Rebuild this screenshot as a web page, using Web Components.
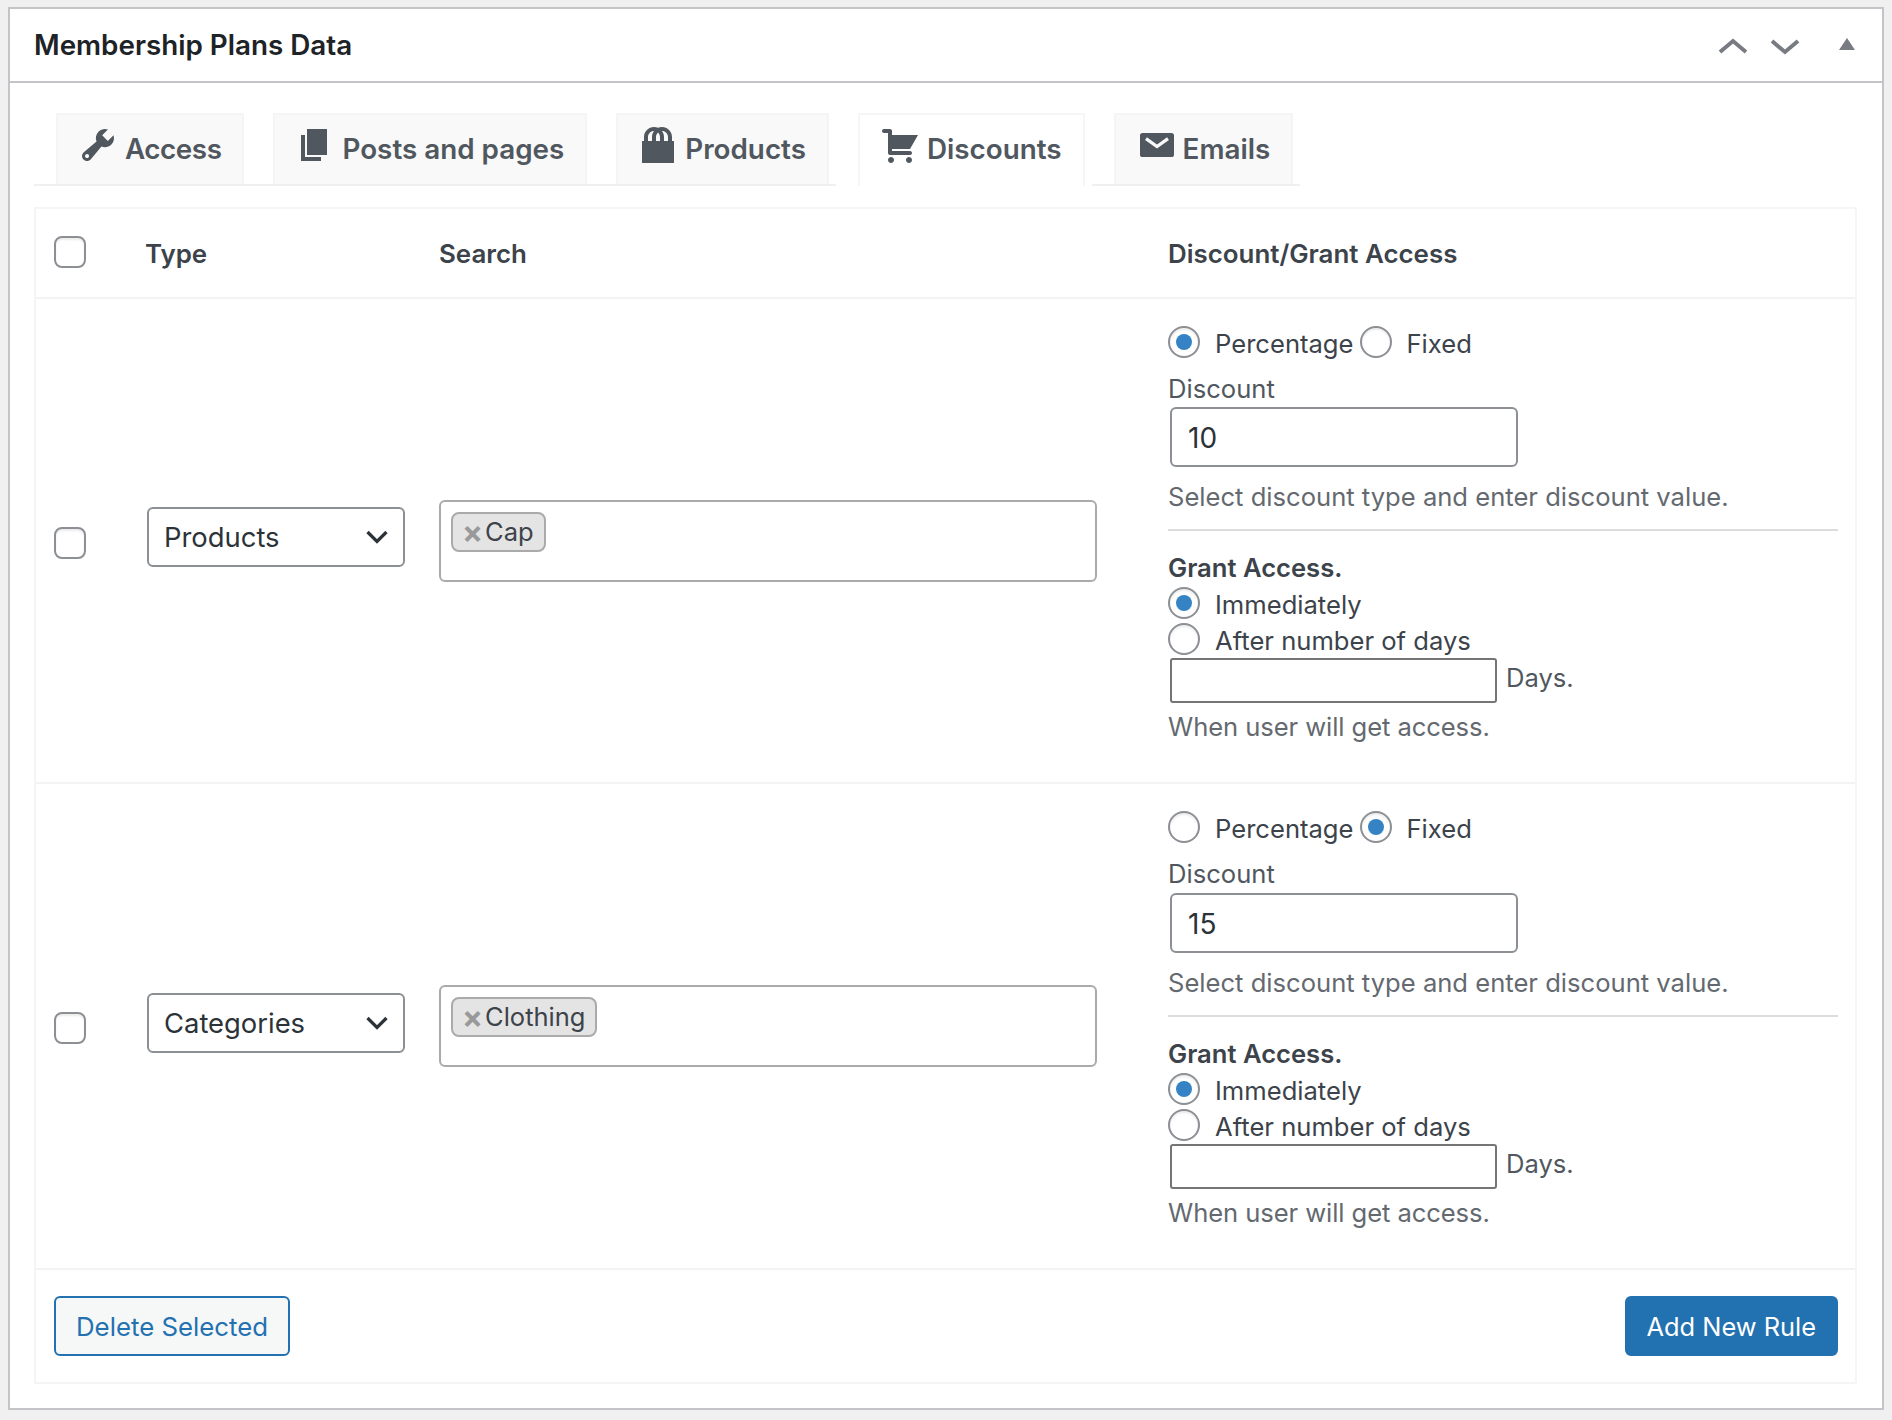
<!DOCTYPE html>
<html lang="en"><head><meta charset="utf-8"><title>Membership Plans Data</title>
<style>
html,body{margin:0;padding:0;background:#f0f0f1}
body{padding:7px 8px 10px;font-family:Inter,"Liberation Sans",sans-serif;font-size:27px;color:#3c434a}
</style></head><body>
<x-metabox heading="Membership Plans Data">
  <x-tabs>
    <x-tab icon="tools" style="letter-spacing:-.45px">Access</x-tab>
    <x-tab icon="page">Posts and pages</x-tab>
    <x-tab icon="bag">Products</x-tab>
    <x-tab icon="cart" active>Discounts</x-tab>
    <x-tab icon="mail">Emails</x-tab>
  </x-tabs>
  <x-rules>
    <x-rule type="Products" tag="Cap" mode="percentage" value="10"></x-rule>
    <x-rule type="Categories" tag="Clothing" mode="fixed" value="15" style="height:486px;--gap:3px"></x-rule>
  </x-rules>
</x-metabox>
<script>
const p=d=>`<path fill="#50575e" d="${d}"/>`;
const ICONS={
tools:p('M16.68 9.77c-1.34 1.34-3.3 1.67-4.95.99l-5.41 6.52c-.99.99-2.59.99-3.58 0s-.99-2.59 0-3.57l6.52-5.42c-.68-1.65-.35-3.61.99-4.95 1.28-1.28 3.12-1.62 4.72-1.06l-2.89 2.89 2.82 2.82 2.86-2.87c.53 1.58.18 3.39-1.08 4.65zM3.81 16.21c.4.39 1.04.39 1.43 0 .4-.4.4-1.04 0-1.43-.39-.4-1.03-.4-1.43 0-.39.39-.39 1.03 0 1.43z'),
page:p('M6 15V2h10v13H6zm-1 1h8v2H3V5h2v11z'),
bag:p('M17 8h1v11H2V8h1V6c0-2.76 2.24-5 5-5 .71 0 1.39.15 2 .42.61-.27 1.29-.42 2-.42 2.76 0 5 2.24 5 5v2zM5 6v2h2V6c0-1.13.39-2.16 1.02-3H8C6.35 3 5 4.35 5 6zm10 2V6c0-1.65-1.35-3-3-3h-.02c.63.84 1.02 1.87 1.02 3v2h2zm-5-4.22C9.39 4.33 9 5.12 9 6v2h2V6c0-.88-.39-1.67-1-2.22z'),
cart:p('M6 13h9c.55 0 1 .45 1 1s-.45 1-1 1H5c-.55 0-1-.45-1-1V4H2c-.55 0-1-.45-1-1s.45-1 1-1h3c.55 0 1 .45 1 1v2h13l-4 7H6v1zm-.5 3c.83 0 1.5.67 1.5 1.5S6.33 19 5.5 19 4 18.33 4 17.5 4.67 16 5.5 16zm9 0c.83 0 1.5.67 1.5 1.5s-.67 1.5-1.5 1.5-1.5-.67-1.5-1.5.67-1.5 1.5-1.5z'),
mail:'<rect x="2" y="4" width="17" height="12" rx="1.3" fill="#50575e"/><path d="M5 6.800 10.500 10.800 16 6.800" fill="none" stroke="#f9f9f9" stroke-width="1.600"/>'};
class Base extends HTMLElement{
  constructor(){super();this.attachShadow({mode:'open'})}
  connectedCallback(){this.shadowRoot.innerHTML=this.render()}
}
const a=(el,n,d='')=>el.getAttribute(n)??d;
customElements.define('x-metabox',class extends Base{render(){return `<style>
:host{display:block;background:#fff;border:2px solid #c3c4c7}
header{display:flex;align-items:center;height:72px;padding:0 0 0 24px;border-bottom:2px solid #c3c4c7;box-sizing:content-box}
h2{flex:1;margin:0;font:600 27.8px/32px Inter,sans-serif;color:#1d2327}
.ctl{display:flex;align-items:flex-start;height:72px;padding-right:26px}
svg{display:block}
main{display:block;padding:30px 25px 24px 24px}
</style><header><h2>${a(this,'heading')}</h2><div class="ctl">
<svg width="34" height="72" viewBox="0 0 34 72" style="margin-right:18px"><path d="M4 43 17 32 30 43" fill="none" stroke="#787c82" stroke-width="4"/></svg>
<svg width="34" height="72" viewBox="0 0 34 72" style="margin-right:36px"><path d="M4 32 17 43 30 32" fill="none" stroke="#787c82" stroke-width="4"/></svg>
<svg width="18" height="72" viewBox="0 0 18 72"><path d="M9 29 17 41H1z" fill="#787c82"/></svg>
</div></header><main><slot></slot></main>`}});
customElements.define('x-tabs',class extends Base{render(){return `<style>
:host{display:flex;margin-bottom:21px}
</style><slot></slot>`}});
customElements.define('x-tab',class extends Base{render(){const on=this.hasAttribute('active');return `<style>
:host{display:block;padding:0 7px 0 22px;${on?'':'border-bottom:2px solid #f0f0f1;'}}
.t{display:flex;align-items:flex-start;gap:7px;box-sizing:border-box;height:${on?73:71}px;padding:10px 21px 0 20px;border:2px solid ${on?'#f6f6f6':'#f5f5f5'};border-bottom:0;background:${on?'#fff':'#f9f9f9'};
font:600 27.8px/48px Inter,sans-serif;color:#50575e}
svg{display:block;flex:none}
</style><div class="t"><svg width="40" height="40" viewBox="0 0 20 20">${ICONS[a(this,'icon')]}</svg><span><slot></slot></span></div>`}});
customElements.define('x-rules',class extends Base{render(){return `<style>
:host{display:block;border:2px solid #f5f5f5}
.h{display:grid;grid-template-columns:91px 294px 729px 1fr;height:86px;padding:2px 0 0 18px;align-items:center;border-bottom:2px solid #f3f3f3;font:600 25.9px/34px Inter,sans-serif;color:#3c434a}
.h x-check{margin-top:-4px}
.f{display:flex;justify-content:space-between;padding:26px 17px 26px 18px}
</style><div class="h"><x-check></x-check><span>Type</span><span>Search</span><span>Discount/Grant Access</span></div>
<slot></slot>
<div class="f"><x-btn>Delete Selected</x-btn><x-btn primary>Add New Rule</x-btn></div>`}});
customElements.define('x-check',class extends Base{render(){return `<style>
:host{display:block;width:32px;height:32px;box-sizing:border-box;border:2px solid #8c8f94;border-radius:8px;background:#fff;box-shadow:inset 0 2px 2px rgba(0,0,0,.08)}
</style>`}});
customElements.define('x-radio',class extends Base{render(){const on=this.hasAttribute('checked');return `<style>
:host{display:inline-flex;align-items:center;font:400 25.6px/29px Inter,sans-serif;color:#3c434a}
i{display:flex;align-items:center;justify-content:center;box-sizing:border-box;width:32px;height:32px;flex:none;border:2px solid #8c8f94;border-radius:50%;background:#fff;margin-right:15px;box-shadow:inset 0 2px 2px rgba(0,0,0,.08)}
b{display:${on?'block':'none'};width:16px;height:16px;border-radius:50%;background:#3582c4}
span{padding-top:3px}
</style><i><b></b></i><span><slot></slot></span>`}});
customElements.define('x-btn',class extends Base{render(){const p=this.hasAttribute('primary');return `<style>
:host{display:block;box-sizing:border-box;height:60px;padding:0 20px;border:2px solid #2271b1;border-radius:6px;background:${p?'#2271b1':'#f6f7f7'};color:${p?'#fff':'#2271b1'};font:400 ${p?25.4:25.8}px/58px Inter,sans-serif}
</style><slot></slot>`}});
customElements.define('x-select',class extends Base{render(){return `<style>
:host{display:flex;align-items:center;justify-content:space-between;box-sizing:border-box;width:258px;height:60px;padding:0 15px 0 15px;border:2px solid #8c8f94;border-radius:6px;background:#fff;font:400 27.4px/34px Inter,sans-serif;color:#2c3338}
svg{display:block}
</style><span><slot></slot></span><svg width="22" height="14" viewBox="0 0 22 14"><path d="M1.500 2 11 11.500 20.500 2" fill="none" stroke="#2c3338" stroke-width="3.200"/></svg>`}});
customElements.define('x-tag',class extends Base{render(){return `<style>
:host{display:inline-flex;align-items:center;box-sizing:border-box;height:40px;padding:0 10px 0 9px;border:2px solid #aaa;border-radius:8px;background:#e4e4e4;font:400 25.5px/36px Inter,sans-serif;color:#3c434a}
span{color:#999;font-weight:700;font-size:31px;margin-right:2px;line-height:36px}
</style><span>×</span><slot></slot>`}});
customElements.define('x-field',class extends Base{render(){return `<style>
:host{display:flex;align-items:center;box-sizing:border-box;height:var(--h,60px);width:var(--w,348px);margin-left:2px;padding:2px 16px 0;border:2px solid #8c8f94;border-radius:var(--r,6px);background:#fff;font:400 28px/32px Inter,sans-serif;color:#2c3338}
</style><slot></slot>`}});
customElements.define('x-rule',class extends Base{render(){const f=a(this,'mode')==='fixed';return `<style>
:host{display:grid;grid-template-columns:91px 294px 729px 1fr;align-items:center;box-sizing:border-box;height:485px;padding-left:18px;border-bottom:2px solid #f3f3f3}
.search{box-sizing:border-box;width:658px;height:82px;padding:10px;border:2px solid #aaa;border-radius:6px}
.sel{margin:-7px 0 0 2px}
.chk{margin-top:4px}
.d{align-self:start;margin-top:27px;width:670px;font:400 25.6px/32px Inter,sans-serif;color:#50575e}
.d>div{height:32px}
.lbl{margin-top:15px}
.help{color:#646970}
x-field{margin-top:var(--gap,2px)}
.help{margin-top:14px}
hr{height:2px;margin:16px 0 0;border:0;background:#dcdcde}
.grant{margin-top:21px;font-weight:600;color:#3c434a}
.r{margin-top:4px;display:flex}
.d>.days{display:flex;align-items:center;gap:9px;height:45px;margin-top:3px;--h:45px;--w:327px;--r:3px;color:#50575e}
.days x-field{margin-top:0;border-color:#757575}
.days span{margin-bottom:6px}
.radios{display:flex;gap:6px}
.when{letter-spacing:-.08px}
</style>
<x-check class="chk"></x-check>
<x-select class="sel">${a(this,'type')}</x-select>
<div class="search"><x-tag>${a(this,'tag')}</x-tag></div>
<div class="d">
 <div class="radios"><x-radio ${f?'':'checked'}>Percentage</x-radio><x-radio ${f?'checked':''}>Fixed</x-radio></div>
 <div class="lbl">Discount</div>
 <x-field>${a(this,'value')}</x-field>
 <div class="help">Select discount type and enter discount value.</div>
 <hr>
 <div class="grant">Grant Access.</div>
 <x-radio class="r" checked style="margin-top:3px">Immediately</x-radio>
 <x-radio class="r">After number of days</x-radio>
 <div class="days"><x-field></x-field><span>Days.</span></div>
 <div class="help when" style="margin-top:8px">When user will get access.</div>
</div>`}});
</script>
</body></html>
